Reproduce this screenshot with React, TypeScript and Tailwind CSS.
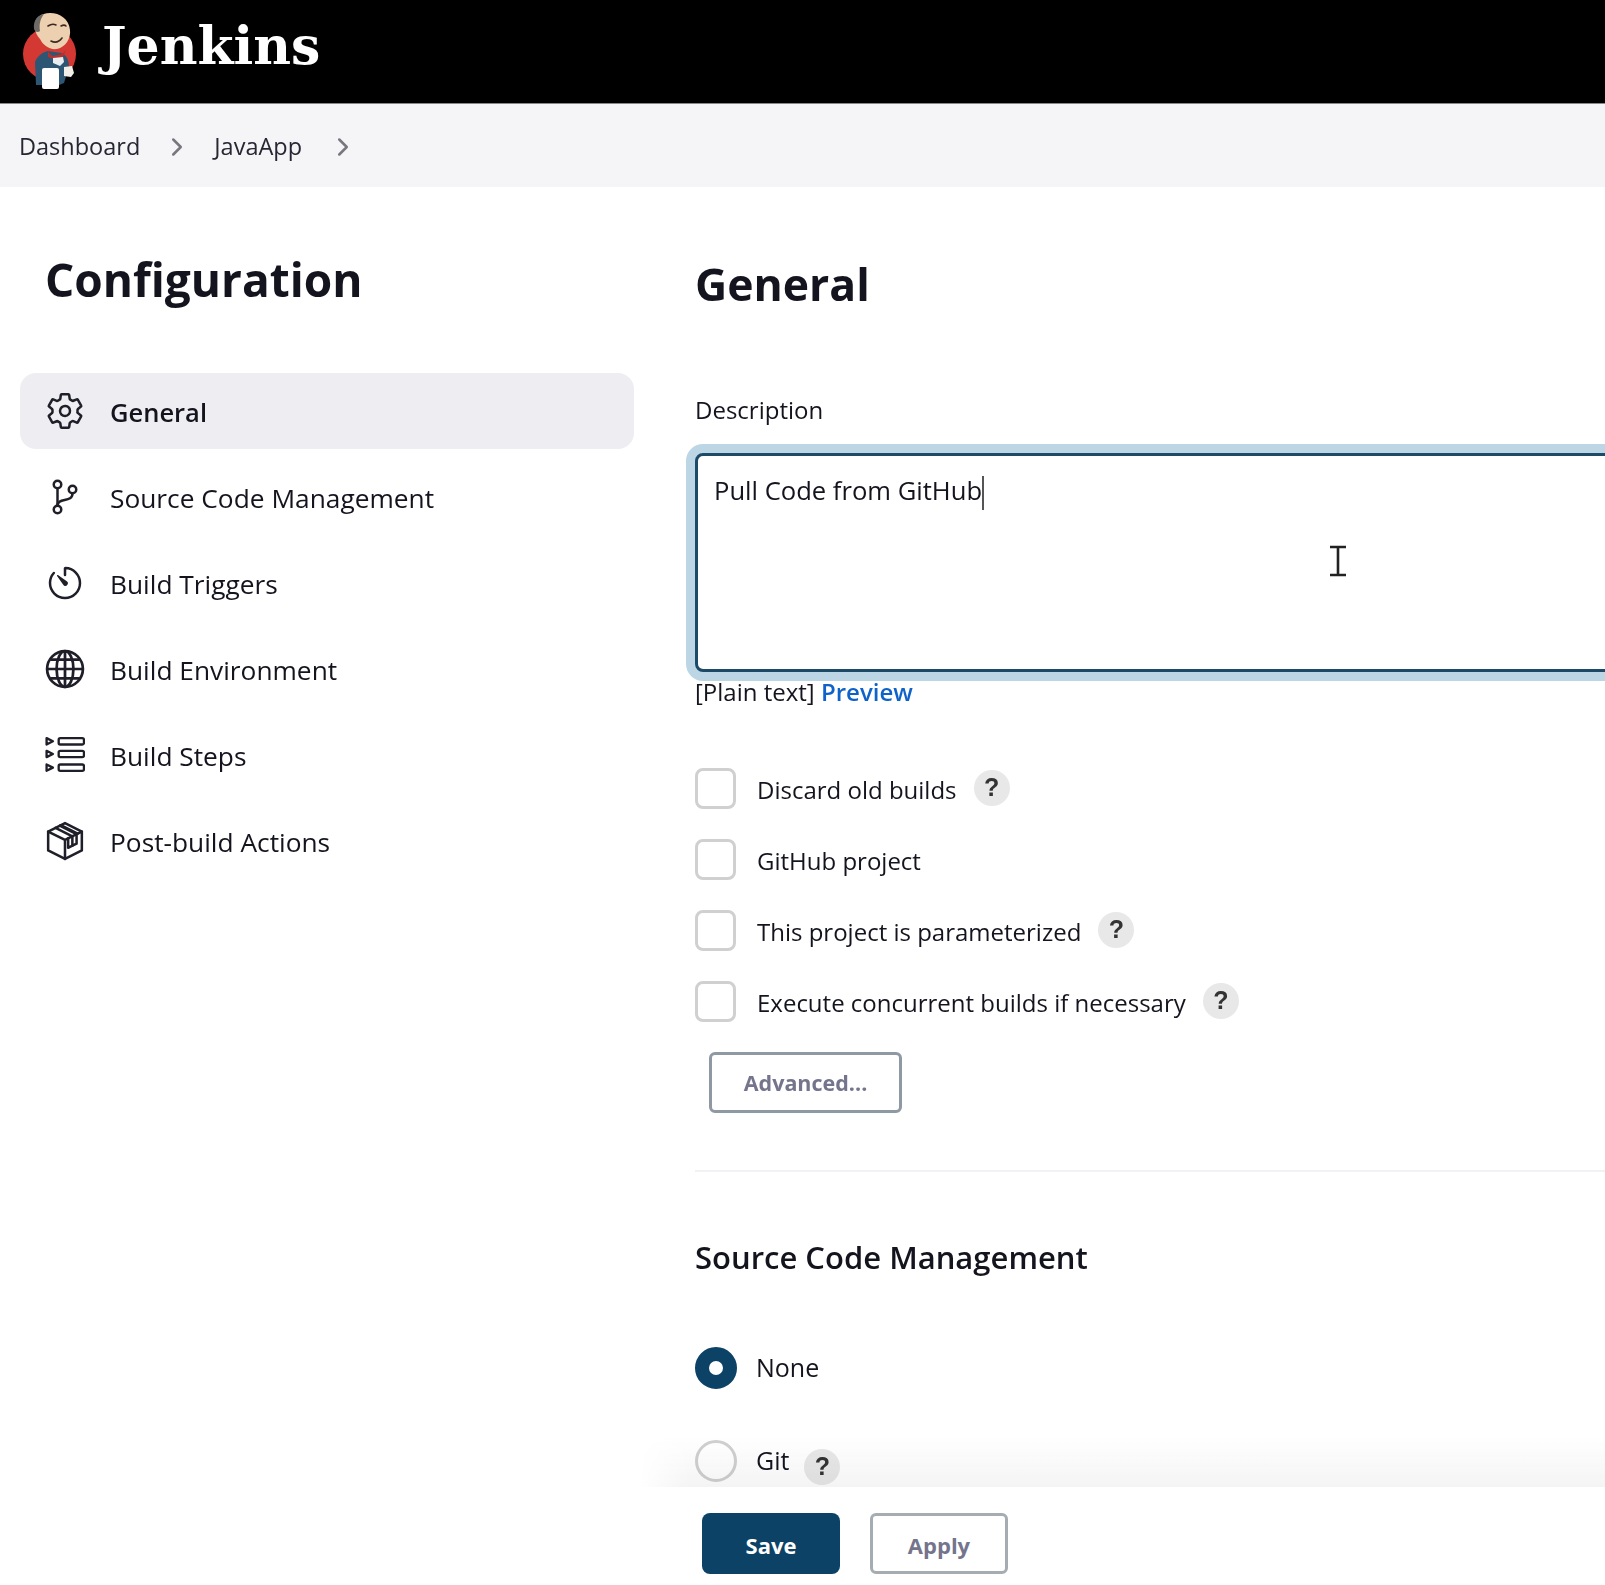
import React from 'react';
import { IoSettingsOutline, IoGitBranchOutline, IoTimerOutline } from 'react-icons/io5';
import { ChevronRight } from 'lucide-react';

function GlobeIcon({ className }: { className?: string }) {
  return (
    <svg viewBox="0 0 38 38" fill="none" stroke="currentColor" strokeWidth="2.6" className={className}>
      <circle cx="19" cy="19" r="17" />
      <ellipse cx="19" cy="19" rx="8" ry="17" />
      <path d="M19 2v34M2 19h34M5 10h28M5 28h28" />
    </svg>
  );
}

function StepsIcon({ className }: { className?: string }) {
  return (
    <svg viewBox="0 0 38 38" fill="none" stroke="currentColor" strokeWidth="2.2" strokeLinejoin="round" className={className}>
      <rect x="13" y="3" width="24" height="6" rx="1.5" />
      <rect x="13" y="15" width="24" height="6" rx="1.5" />
      <rect x="13" y="28" width="24" height="6" rx="1.5" />
      <path d="M1.5 3l6 3-6 3zM1.5 15l6 3-6 3zM1.5 28l6 3-6 3z" />
    </svg>
  );
}

function PackageIcon({ className }: { className?: string }) {
  return (
    <svg viewBox="0 0 38 38" fill="none" stroke="currentColor" strokeWidth="2.4" strokeLinejoin="round" strokeLinecap="round" className={className}>
      <path d="M19 2L35 10v18l-16 8-16-8V10z" />
      <path d="M3 10l16 8 16-8M19 18v18" />
      <path d="M10 6.500l16 8v9l4-2v-9l-16-8" />
      <path d="M15 4l16 8" />
      <path d="M22 16.500v9l4-2" />
    </svg>
  );
}

function JenkinsLogo() {
  return (
    <svg viewBox="0 0 70 90" className="w-[70px] h-[90px] shrink-0 -mt-[3px]">
      <circle cx="34.500" cy="49" r="26.500" fill="#d33833" />
      <path d="M21 80L20 57C22 51 28 47 33 46L46 48C52 50 54 56 54 62L49 78 44 80z" fill="#2c5673" />
      <path d="M20 22C19 13 26 8 35 8c10 0 19 6 20 17 1 8-4 17-13 19-8 1-14-4-17-10-3-3-5-7-5-12z" fill="#ecd0b0" />
      <path d="M19 24C18 15 23 10 29 9c-4 5-5 11-4 17-2 2-5 1-6-2z" fill="#6e6a66" />
      <path d="M33 21c3-2 6-2 8-1M46 21c2-1 4-1 5 0M36 36c4 2 8 1 11-3" fill="none" stroke="#3a2a20" strokeWidth="1.600" strokeLinecap="round" />
      <path d="M33 44c0 3 2 6 5 7l9-2 4-4-3 7-6 3-9-3z" fill="#b8302c" />
      <path d="M38 53l10-1 1 5-4 4-7-3z" fill="#e8edf0" />
      <rect x="27" y="63" width="17" height="21" rx="2" fill="#fff" />
      <path d="M49 62l8-1 2 7-3 4-7-1z" fill="#f2efe9" />
    </svg>
  );
}

function HelpBadge({ className = '' }: { className?: string }) {
  return (
    <span className={`w-[36px] h-[36px] rounded-full bg-[#e8e8e8] text-[#333] flex items-center justify-center text-[25px] font-bold font-['Liberation_Sans',sans-serif] ${className}`}>?</span>
  );
}

const NAV_ITEMS = [
  { label: 'General', icon: IoSettingsOutline, active: true },
  { label: 'Source Code Management', icon: IoGitBranchOutline },
  { label: 'Build Triggers', icon: IoTimerOutline },
  { label: 'Build Environment', icon: GlobeIcon },
  { label: 'Build Steps', icon: StepsIcon },
  { label: 'Post-build Actions', icon: PackageIcon },
];

const OPTIONS = [
  { label: 'Discard old builds', help: true },
  { label: 'GitHub project', help: false },
  { label: 'This project is parameterized', help: true },
  { label: 'Execute concurrent builds if necessary', help: true },
];

export default function App() {
  return (
    <div className="relative w-[1605px] h-[1585px] overflow-hidden bg-white text-[#14141f] font-['Open_Sans','Noto_Sans',sans-serif]">
      <header className="h-[104px] bg-black flex items-center pl-[15px] border-b border-b-[#888]">
        <JenkinsLogo />
        <span className="ml-[17px] -mt-[11px] text-white text-[52px] font-bold font-['DejaVu_Serif',serif]">Jenkins</span>
      </header>

      <nav className="h-[83px] bg-[#f5f5f7] flex items-center pl-[19px] pt-[2px] text-[23.500px] text-[#272734]">
        <span>Dashboard</span>
        <ChevronRight className="w-[30px] h-[30px] text-[#77777f] ml-[22px]" />
        <span className="ml-[22px]">JavaApp</span>
        <ChevronRight className="w-[30px] h-[30px] text-[#77777f] ml-[26px]" />
      </nav>

      <div className="flex">
        <aside className="w-[614px] ml-[20px] shrink-0">
          <h1 className="ml-[25px] mt-[57px] text-[46px] leading-[70px] font-bold text-[#14141f]">Configuration</h1>
          <ul className="mt-[59px] flex flex-col gap-[10px]">
            {NAV_ITEMS.map((item) => (
              <li
                key={item.label}
                className={`h-[76px] rounded-[16px] flex items-center pl-[25px] ${item.active ? 'bg-[#eeeef2] text-[25.500px] font-semibold' : 'text-[26.300px]'}`}
              >
                <item.icon className="w-[40px] h-[40px] shrink-0 text-[#1f1f2a]" />
                <span className={`ml-[25px] ${item.active ? 'pt-[2px]' : 'pt-[3px]'}`}>{item.label}</span>
              </li>
            ))}
          </ul>
        </aside>

        <main className="relative ml-[61px] w-[1000px] shrink-0">
          <h2 className="mt-[62px] text-[44.500px] leading-[70px] font-bold">General</h2>
          <label className="block mt-[73px] text-[24px] leading-[36px]">Description</label>
          <div className="mt-[25px] h-[219px] rounded-[8px] border-[3px] border-[#1c4a68] ring-[9px] ring-[#bdd6e6] bg-white pl-[16px] pt-[17px] text-[25.600px] leading-[36px]">
            Pull Code from GitHub<span className="inline-block w-[2px] h-[34px] bg-[#555] align-middle" />
          </div>
          <p className="mt-[2px] text-[24px] leading-[36px]">
            [Plain text] <span className="text-[#0f62c9] font-semibold">Preview</span>
          </p>

          <div className="mt-[58px] flex flex-col gap-[31px]">
            {OPTIONS.map((option) => (
              <div key={option.label} className="flex items-center h-[40px]">
                <span className="w-[41px] h-[41px] rounded-[8px] border-[3px] border-[#d0d0d0] shrink-0" />
                <span className="ml-[21px] pt-[3px] text-[24px]">{option.label}</span>
                {option.help && <HelpBadge className="ml-[17px]" />}
              </div>
            ))}
          </div>

          <button className="mt-[31px] ml-[14px] w-[193px] h-[61px] pt-[2px] rounded-[6px] border-[3px] border-[#8f99a3] text-[21.500px] font-bold text-[#74748c]">Advanced...</button>

          <div className="mt-[57px] h-[2px] bg-[#f2f2f4]" />

          <h3 className="mt-[61px] text-[31px] leading-[48px] font-semibold">Source Code Management</h3>

          <div className="mt-[66px] flex items-center h-[42px]">
            <span className="w-[42px] h-[42px] rounded-full border-[14px] border-[#0b4266] bg-white shrink-0" />
            <span className="ml-[19px] text-[25px]">None</span>
          </div>
          <div className="mt-[51px] flex items-center h-[42px]">
            <span className="w-[42px] h-[42px] rounded-full border-[3px] border-[#d0d0d0] shrink-0" />
            <span className="ml-[19px] text-[25px]">Git</span>
            <HelpBadge className="ml-[15px] mt-[12px]" />
          </div>
        </main>
      </div>

      {/* bottom action bar: soft shadow behind the last rows, then the buttons */}
      <div className="absolute left-[640px] right-0 top-[1436px] h-[52px] bg-gradient-to-b from-transparent to-[#f4f4f4] mix-blend-multiply" />
      <div className="absolute left-[640px] w-[50px] top-[1436px] h-[52px] bg-gradient-to-r from-white to-transparent" />
      <div className="absolute left-[640px] right-0 top-[1487px] bottom-0 bg-white flex items-start pl-[62px] pt-[26px] gap-[30px]">
        <button className="w-[138px] h-[61px] pt-[3px] rounded-[8px] bg-[#0b4266] text-white text-[22px] font-bold">Save</button>
        <button className="w-[138px] h-[61px] pt-[3px] rounded-[6px] border-[3px] border-[#a5adb3] text-[#74748c] text-[22px] font-bold">Apply</button>
      </div>

      {/* text cursor over the textarea */}
      <svg viewBox="0 0 18 32" className="absolute left-[1329px] top-[545px] w-[18px] h-[32px]" fill="none" stroke="#222" strokeWidth="2.600">
        <path d="M1 2h16M9 2v28M1 30h16" />
      </svg>
    </div>
  );
}
